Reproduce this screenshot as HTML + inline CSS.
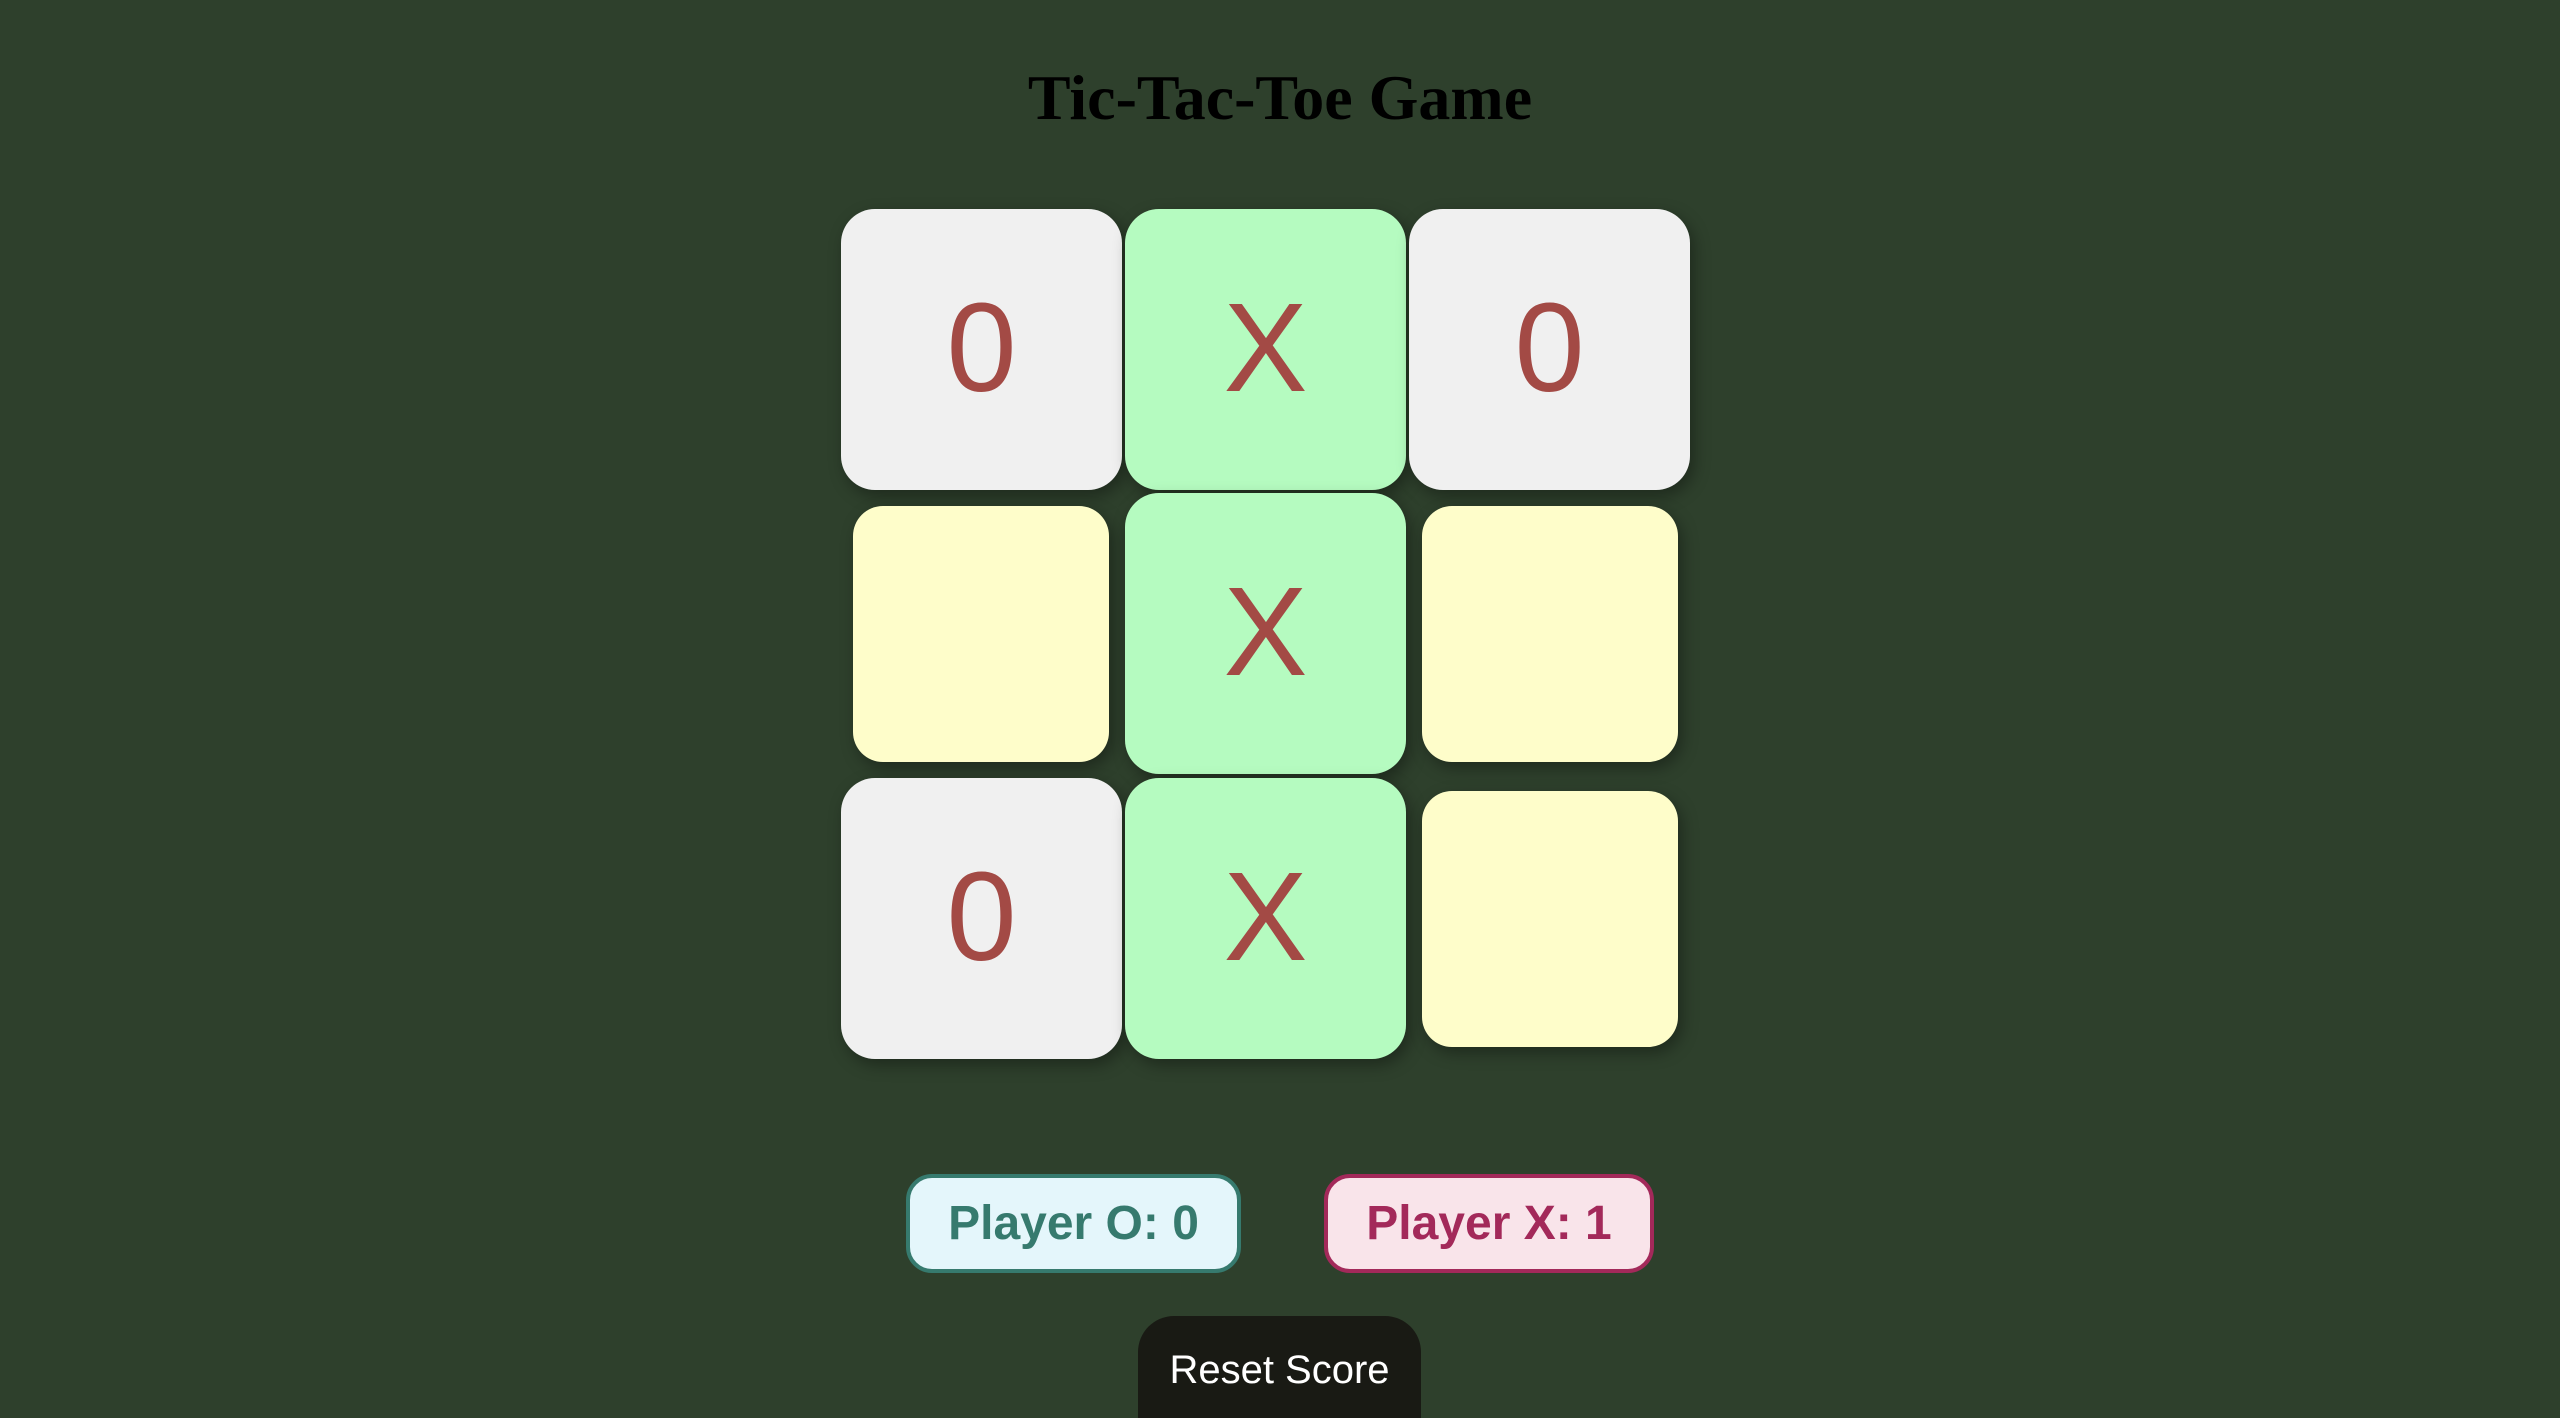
<!DOCTYPE html>
<html><head><style>
html,body{margin:0;padding:0;overflow:hidden;}
body{width:2560px;height:1418px;background:#2e402c;position:relative;overflow:hidden;font-family:"Liberation Sans",sans-serif;}
h1{position:absolute;left:0;width:2560px;top:58px;margin:0;text-align:center;font-family:"Liberation Serif",serif;font-weight:bold;font-size:64px;color:#000;line-height:80px;}
.c{position:absolute;border-radius:34px;box-shadow:4px 6px 16px rgba(0,0,0,0.35);display:flex;align-items:center;justify-content:center;color:#a34a45;font-size:126px;line-height:1;}
.c span{position:relative;top:-2px;}
.g{background:#f0f0f0;width:281px;height:281px;}
.x{background:#b5fbc0;width:281px;height:281px;}
.y{background:#fefdca;width:256px;height:256px;border-radius:30px;}
.s{position:absolute;top:1174px;height:99px;box-sizing:border-box;border:4px solid;border-radius:26px;font-weight:bold;font-size:48px;display:flex;align-items:center;justify-content:center;}
.r{position:absolute;left:1138px;top:1316px;width:283px;height:102px;background:#191a14;border-radius:36px 36px 0 0;color:#fff;font-size:40px;}
.r span{position:absolute;left:0;width:283px;text-align:center;top:32px;}
</style></head><body>
<h1>Tic-Tac-Toe Game</h1>
<div class="c g" style="left:841px;top:209px"><span>0</span></div>
<div class="c x" style="left:1125px;top:209px"><span>X</span></div>
<div class="c g" style="left:1409px;top:209px"><span>0</span></div>
<div class="c y" style="left:853px;top:506px"></div>
<div class="c x" style="left:1125px;top:493px"><span>X</span></div>
<div class="c y" style="left:1422px;top:506px"></div>
<div class="c g" style="left:841px;top:778px"><span>0</span></div>
<div class="c x" style="left:1125px;top:778px"><span>X</span></div>
<div class="c y" style="left:1422px;top:791px"></div>
<div class="s" style="left:906px;width:335px;border-color:#367a6e;background:#e4f6fb;color:#367a6e">Player O: 0</div>
<div class="s" style="left:1324px;width:330px;border-color:#a3295a;background:#f9e4ea;color:#a3295a">Player X: 1</div>
<div class="r"><span>Reset Score</span></div>
</body></html>
